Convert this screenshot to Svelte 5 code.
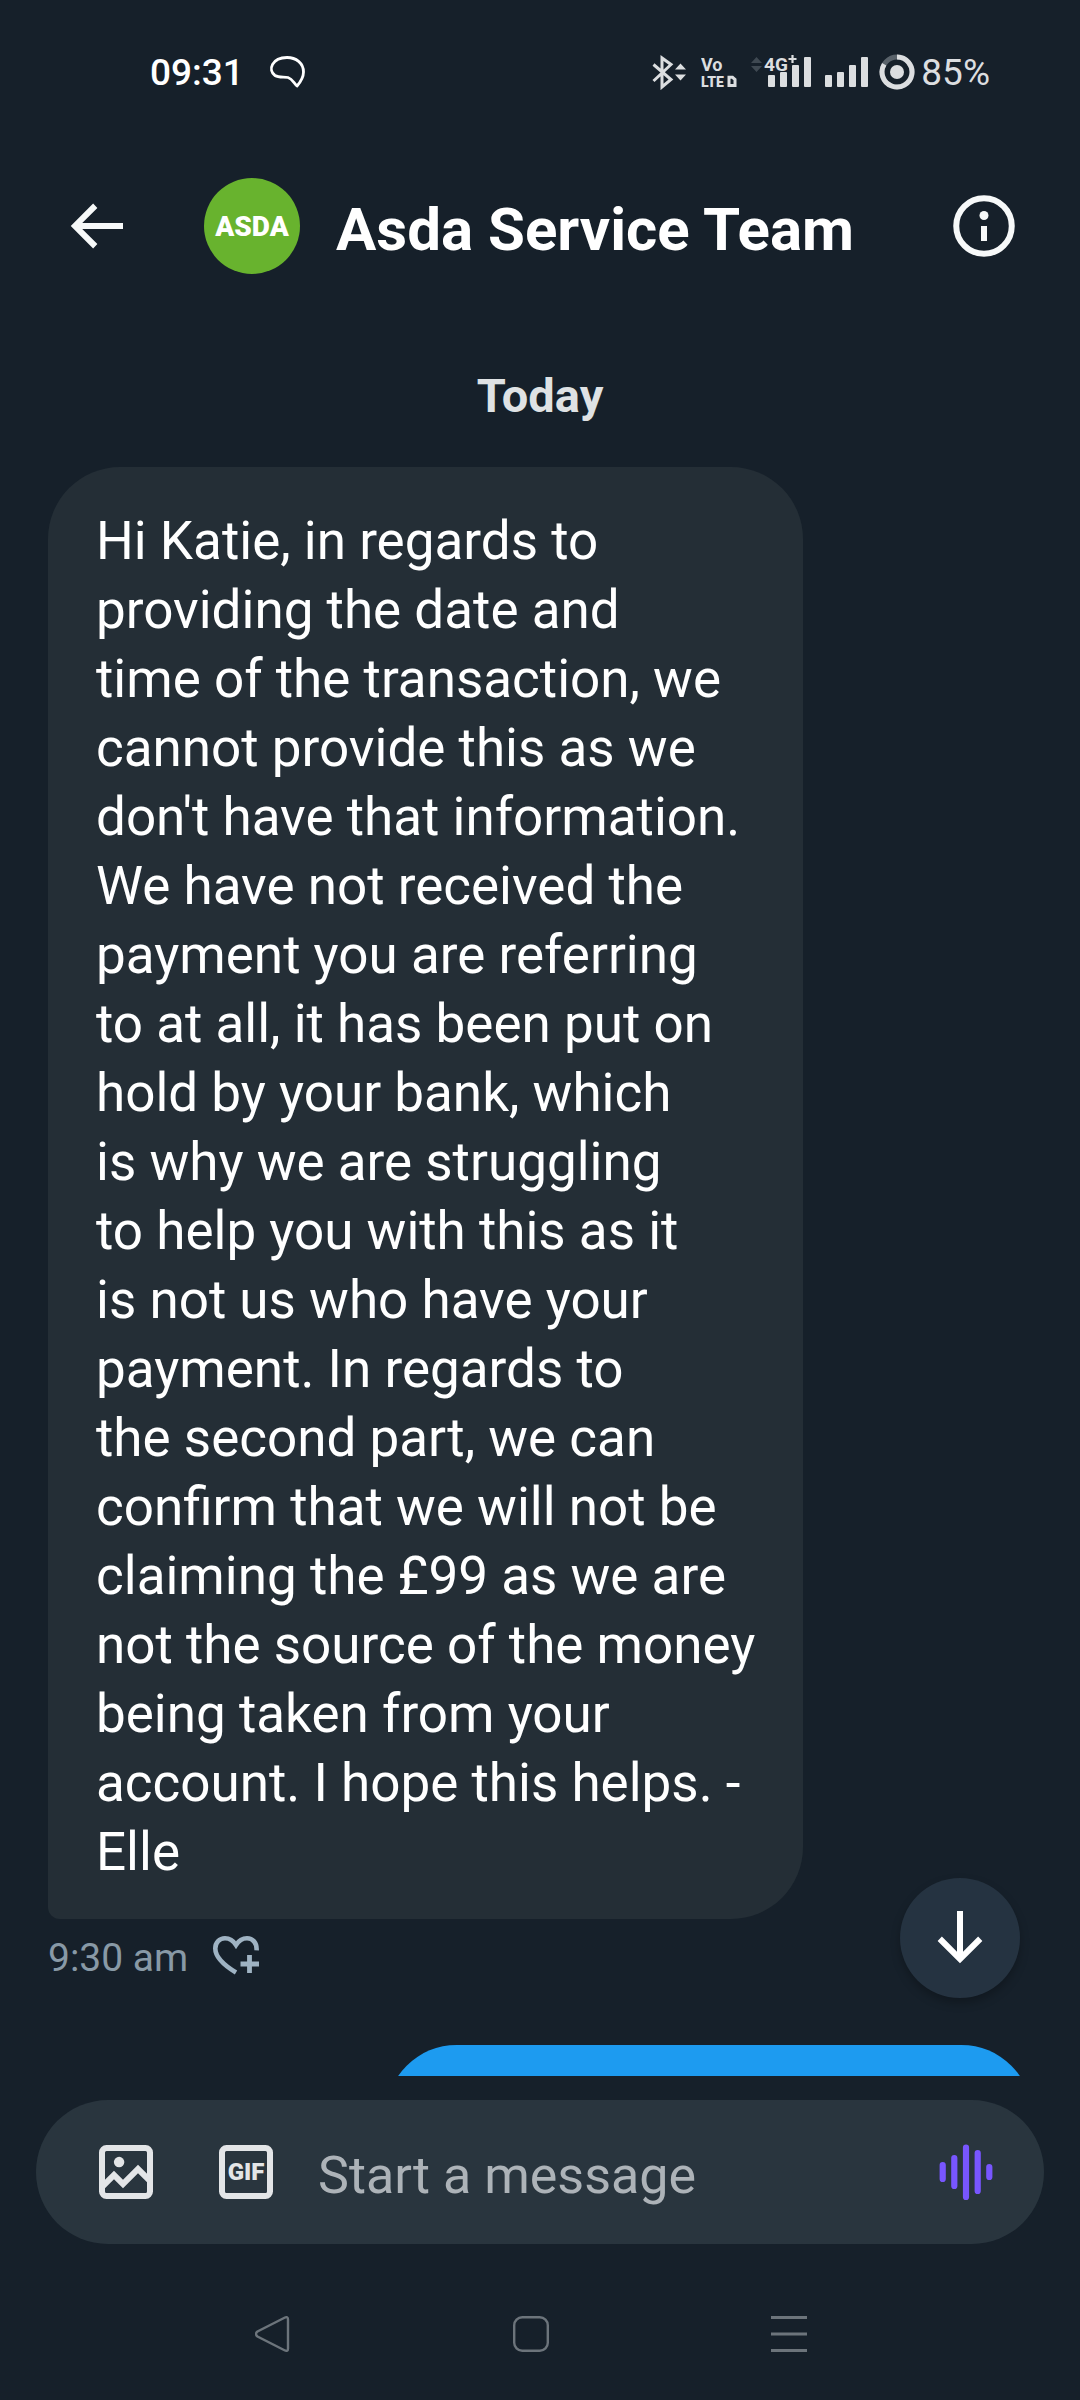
<script>
  const contact = 'Asda Service Team';
  const message = [
    'Hi Katie, in regards to',
    'providing the date and',
    'time of the transaction, we',
    'cannot provide this as we',
    "don't have that information.",
    'We have not received the',
    'payment you are referring',
    'to at all, it has been put on',
    'hold by your bank, which',
    'is why we are struggling',
    'to help you with this as it',
    'is not us who have your',
    'payment. In regards to',
    'the second part, we can',
    'confirm that we will not be',
    'claiming the £99 as we are',
    'not the source of the money',
    'being taken from your',
    'account. I hope this helps. -',
    'Elle'
  ].join('\n');
  let draft = $state('');
</script>

<div class="screen">
  <div class="status">
    <div class="status-left">
      <span class="clock">09:31</span>
      <svg width="40" height="36" viewBox="0 0 40 36" aria-hidden="true">
        <path d="M19 3.500C28 3.500 35.500 9 35.500 18C35.500 23 32.500 28 29 32C26 29.500 24.500 25 20 23.500C16 22.500 11 24 7 21.500C-.5 16 4 3.500 19 3.500Z" fill="none" stroke="#fff" stroke-width="2.800" stroke-linejoin="round" />
      </svg>
    </div>
    <div class="status-right">
      <svg width="36" height="36" viewBox="0 0 36 36" aria-hidden="true">
        <path d="M2.500 10.500L20 25.500L11 33V4L20 10.500L2.500 27" fill="none" stroke="#dcdee0" stroke-width="3" />
        <path d="M24 15.500L29.500 9.500L35 15.500ZM24 20.500L29.500 26.500L35 20.500Z" fill="#dcdee0" />
      </svg>
      <svg width="36" height="36" viewBox="0 0 36 36" aria-hidden="true">
        <text class="tiny vo" x="0" y="17">Vo</text>
        <text class="tiny" x="0" y="33">LTE</text>
        <path d="M28 23.300H31.500L34 25.500V31.500H28Z" fill="none" stroke="#dcdee0" stroke-width="3" />
      </svg>
      <svg width="60" height="36" viewBox="0 0 60 36" aria-hidden="true">
        <path d="M0 9L5.500 3L11 9ZM0 12L5.500 18L11 12Z" fill="#3f4952" />
        <text class="tiny network" x="13" y="17">4G</text>
        <path d="M41.500 1V9M37.500 5H45.500" stroke="#dcdee0" stroke-width="2.200" />
        <g fill="#dcdee0">
          <rect x="17" y="21" width="7" height="12" rx="1" />
          <rect x="29" y="18" width="7" height="15" rx="1" />
          <rect x="41" y="11" width="7" height="22" rx="1" />
          <rect x="53" y="3" width="7" height="30" rx="1" />
        </g>
      </svg>
      <svg width="44" height="36" viewBox="0 0 44 36" aria-hidden="true">
        <g fill="#dcdee0">
          <rect x="0" y="21" width="7" height="12" rx="1" />
          <rect x="12" y="18" width="7" height="15" rx="1" />
          <rect x="24" y="11" width="7" height="22" rx="1" />
          <rect x="36" y="3" width="7" height="30" rx="1" />
        </g>
      </svg>
      <div class="battery">
        <svg width="36" height="36" viewBox="0 0 36 36" aria-hidden="true">
          <circle cx="18" cy="18" r="15" fill="none" stroke="#59626a" stroke-width="5" />
          <path d="M18 3A15 15 0 1 1 5.200 10.200" fill="none" stroke="#dcdee0" stroke-width="5" />
          <circle cx="18" cy="18" r="7" fill="#dcdee0" />
        </svg>
        <span>85%</span>
      </div>
    </div>
  </div>

  <header>
    <button class="icon" aria-label="Back">
      <svg width="72" height="72" viewBox="0 0 24 24"><path fill="#f7f9f9" d="M7.414 13l5.043 5.040-1.414 1.420L3.586 12l7.457-7.460 1.414 1.420L7.414 11H21v2H7.414z" /></svg>
    </button>
    <svg class="avatar" width="96" height="96" viewBox="0 0 96 96" role="img" aria-label="Asda">
      <circle cx="48" cy="48" r="48" fill="#68b32e" />
      <text x="48" y="58" text-anchor="middle">ASDA</text>
    </svg>
    <h1>{contact}</h1>
    <button class="icon" aria-label="Conversation info">
      <svg width="72" height="72" viewBox="0 0 24 24">
        <circle cx="12" cy="12" r="9.250" fill="none" stroke="#f7f9f9" stroke-width="2" />
        <circle cx="12" cy="8.500" r="1.500" fill="#f7f9f9" />
        <path d="M11 12h2v5h-2z" fill="#f7f9f9" />
      </svg>
    </button>
  </header>

  <main>
    <h2>Today</h2>
    <p class="bubble">{message}</p>
    <div class="meta">
      <time>9:30 am</time>
      <button class="icon" aria-label="Add reaction">
        <svg width="48" height="48" viewBox="0 0 48 48">
          <path d="M24 38.500C10 30 3.300 22.500 3.300 14.500C3.300 8.500 7.500 4.300 13 4.300C18 4.300 21.500 7 24 11C26.500 7 30 4.300 35 4.300C40.500 4.300 45 8.500 44.600 16.300" fill="none" stroke="#9fb3c3" stroke-width="4.600" />
          <path d="M37.500 21V39M28.500 30H47" stroke="#9fb3c3" stroke-width="4.800" />
        </svg>
      </button>
    </div>
    <div class="bubble sent"></div>
    <button class="jump" aria-label="Jump to latest">
      <svg width="72" height="72" viewBox="0 0 24 24"><path fill="#fff" d="M13 3v13.590l5.043-5.050 1.414 1.420L12 20.410l-7.457-7.450 1.414-1.420L11 16.590V3h2z" /></svg>
    </button>
  </main>

  <form class="composer" onsubmit={(e) => e.preventDefault()}>
    <button type="button" class="icon" aria-label="Add photo">
      <svg width="72" height="72" viewBox="0 0 24 24">
        <rect x="4" y="4" width="16" height="16" rx="1.500" fill="none" stroke="#e3e5e7" stroke-width="2" />
        <circle cx="9.700" cy="8.700" r="1.750" fill="#e3e5e7" />
        <path d="M4.900 14.700L8 11.600L11 14.600L16 9.600L19.100 12.700V15.500L16 12.400L11 17.400L8 14.400L4.900 17.500Z" fill="#e3e5e7" />
      </svg>
    </button>
    <button type="button" class="icon" aria-label="Add GIF">
      <svg class="gif" width="72" height="72" viewBox="0 0 72 72">
        <rect x="12" y="12" width="48" height="48" rx="4.500" fill="none" stroke="#e3e5e7" stroke-width="6" />
        <text x="36" y="44" text-anchor="middle">GIF</text>
      </svg>
    </button>
    <input type="text" aria-label="Message" placeholder="Start a message" bind:value={draft} />
    <button type="button" class="icon" aria-label="Record voice message">
      <svg width="72" height="72" viewBox="0 0 72 72">
        <path d="M12.700 29V43M24.300 22V50M36 11.500V61M47.700 17V55M59.300 31V41" stroke="#7856ff" stroke-width="6.200" stroke-linecap="round" />
      </svg>
    </button>
  </form>

  <nav aria-label="System">
    <button class="icon" aria-label="Back">
      <svg width="36" height="36" viewBox="0 0 36 36"><path d="M29.500 1.800Q33 0 33 3.500V32.500Q33 36 29.500 34.200L2.500 20.500Q-.5 18 2.500 15.500Z" fill="none" stroke="#6c747b" stroke-width="2.400" /></svg>
    </button>
    <button class="icon" aria-label="Home">
      <svg width="36" height="36" viewBox="0 0 36 36"><rect x="1.200" y="1.200" width="33.600" height="33.600" rx="8" fill="none" stroke="#6c747b" stroke-width="2.400" /></svg>
    </button>
    <button class="icon" aria-label="Recent apps">
      <svg width="36" height="36" viewBox="0 0 36 36"><path d="M0 1.500H36M0 18H36M0 34.500H36" stroke="#6c747b" stroke-width="3" /></svg>
    </button>
  </nav>
</div>

<style>
  :global(body) {
    margin: 0;
    background: #16202a;
  }
  .screen {
    display: flex;
    flex-direction: column;
    height: 100vh;
    background: #16202a;
    color: #fff;
    font-family: Roboto, "Liberation Sans", sans-serif;
    overflow: hidden;
  }
  svg {
    display: block;
    flex: none;
  }
  .icon {
    display: block;
    flex: none;
    padding: 0;
    border: 0;
    background: none;
    font-family: inherit;
  }
  .status {
    display: flex;
    justify-content: space-between;
    flex: none;
    height: 144px;
    padding: 0 90px 0 150px;
    font-size: 37px;
  }
  .status-left,
  .status-right,
  .battery {
    display: flex;
    align-items: center;
  }
  .status-left {
    gap: 24px;
    font-weight: 500;
  }
  .status-right {
    gap: 14px;
    color: #dcdee0;
  }
  .battery {
    gap: 6px;
    margin-left: -4px;
  }
  .tiny {
    font-size: 14px;
    font-weight: 900;
    fill: #dcdee0;
  }
  .tiny.vo {
    font-size: 18px;
    font-weight: 700;
  }
  .tiny.network {
    font-size: 19px;
    font-weight: 700;
  }
  header {
    display: flex;
    align-items: center;
    flex: none;
    height: 164px;
    padding: 0 60px;
  }
  .avatar {
    margin: 0 36px 0 72px;
  }
  .avatar text {
    font-size: 28px;
    font-weight: 900;
    fill: #fff;
  }
  h1 {
    flex: 1;
    margin: 0;
    padding-top: 8px;
    font-size: 60px;
    line-height: 72px;
    font-weight: 700;
    white-space: nowrap;
  }
  main {
    position: relative;
    display: flex;
    flex-direction: column;
    flex: 1;
    min-height: 0;
    padding: 58px 48px 0;
    overflow: hidden;
  }
  main > * {
    flex: none;
  }
  h2 {
    margin: 0 0 41px;
    color: #dfe2e4;
    font-size: 47px;
    line-height: 60px;
    font-weight: 700;
    text-align: center;
  }
  .bubble {
    align-self: flex-start;
    margin: 0;
    padding: 40px 48px 32px;
    border-radius: 72px 72px 72px 12px;
    background: #242e36;
    font-size: 53px;
    line-height: 69px;
    white-space: pre;
  }
  .meta {
    display: flex;
    align-items: center;
    gap: 24px;
    margin: 15px 0 63px;
    color: #8899a6;
    font-size: 39px;
    line-height: 48px;
  }
  .bubble.sent {
    align-self: stretch;
    min-height: 69px;
    margin-left: 338px;
    border-radius: 72px 72px 12px 72px;
    background: #1d9bf0;
  }
  .jump {
    position: absolute;
    right: 60px;
    bottom: 78px;
    display: grid;
    place-items: center;
    width: 120px;
    height: 120px;
    padding: 0;
    border: 0;
    border-radius: 50%;
    background: #253341;
    box-shadow: 0 5px 10px rgba(0, 0, 0, 0.25);
  }
  .composer {
    display: flex;
    align-items: center;
    flex: none;
    height: 144px;
    margin: 24px 36px 0;
    padding: 0 42px 0 54px;
    box-sizing: border-box;
    border-radius: 72px;
    background: #29353e;
  }
  .composer .icon + .icon {
    margin: 0 36px 0 48px;
  }
  .gif text {
    font-size: 24px;
    font-weight: 900;
    fill: #e3e5e7;
  }
  input {
    flex: 1;
    min-width: 0;
    padding: 8px 0 0;
    border: 0;
    outline: 0;
    background: none;
    color: #fff;
    font: inherit;
    font-size: 52px;
    line-height: 72px;
  }
  input::placeholder {
    color: #adb3b8;
    opacity: 1;
  }
  nav {
    display: flex;
    justify-content: center;
    align-items: center;
    gap: 222px;
    flex: none;
    height: 132px;
    padding: 24px 18px 0 0;
  }
</style>
